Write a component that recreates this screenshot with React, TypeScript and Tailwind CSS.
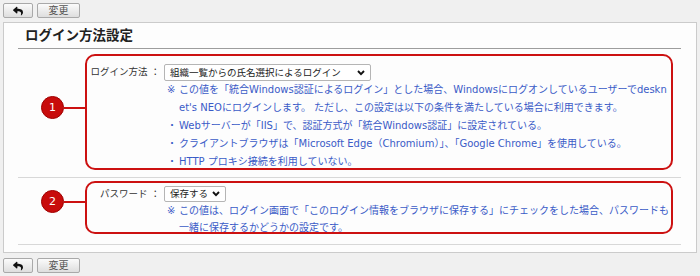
import React from "react";
import { FaReply } from "react-icons/fa";

const FONT = '"DejaVu Sans", "Noto Sans CJK JP", sans-serif';

function ToolButtons() {
  return (
    <div className="flex gap-[4px]">
      <button className="w-[30px] h-[15px] flex items-center justify-center rounded-[2px] border border-[#a9a9a9] bg-gradient-to-b from-[#fbfbfb] to-[#dedede]">
        <FaReply className="w-[10px] h-[10px] text-[#111]" />
      </button>
      <button
        className="w-[43px] h-[15px] flex items-center justify-center rounded-[2px] border border-[#a9a9a9] bg-gradient-to-b from-[#fbfbfb] to-[#dedede] text-[10px] leading-none text-[#555]"
        style={{ fontFamily: FONT }}
      >
        変更
      </button>
    </div>
  );
}

function Chevron() {
  return (
    <svg width="8" height="6" viewBox="0 0 8 6" className="shrink-0">
      <polyline points="1,1 4,4.2 7,1" fill="none" stroke="#111" strokeWidth="1.9" />
    </svg>
  );
}

function FakeSelect({ text, width, height }: { text: string; width: string; height: string }) {
  return (
    <div
      className={`${width} ${height} flex items-center justify-between pl-[5px] pr-[5px] bg-white border border-[#b5b5b5] rounded-[2px] text-[9.5px] text-[#222]`}
    >
      <span className="leading-none">{text}</span>
      <Chevron />
    </div>
  );
}

function Note({ mark, leading, children }: { mark: string; leading: string; children: React.ReactNode }) {
  return (
    <div className={`flex ml-[3px] ${leading} text-[10px] text-[#3a5bc7]`}>
      <span className="w-[12px] shrink-0">{mark}</span>
      <div className="w-[492px] shrink-0 break-all">{children}</div>
    </div>
  );
}

function Badge({ n, top }: { n: string; top: string }) {
  return (
    <div className={`absolute left-[-46px] ${top} flex items-center`}>
      <div className="w-[23px] h-[23px] rounded-full bg-[#c80c0c] border border-[#a00000] flex items-center justify-center text-white text-[11px] leading-none">
        {n}
      </div>
      <div className="w-[22px] h-[2px] bg-[#cc1111]" />
    </div>
  );
}

export default function App() {
  return (
    <div
      className="w-[700px] h-[276px] bg-[#f0f0f0] overflow-hidden"
      style={{ fontFamily: FONT }}
    >
      <div className="pt-[3px] pl-[3px] h-[22px]">
        <ToolButtons />
      </div>

      <div className="mx-[3px] border border-[#cbcbcb] bg-[#fdfdfd] pl-[14px] pr-[15px] pb-[7px]">
        <div className="h-[26px] border-b border-[#9d9d9d] pl-[7px] flex items-center">
          <h1 className="text-[13.5px] font-bold text-[#222] leading-none">ログイン方法設定</h1>
        </div>

        {/* Row 1 */}
        <div className="border-b border-[#d8d8d8] pt-[5px] pb-[7px] pl-[67px] pr-[8px]">
          <div className="relative h-[116px] border-2 border-[#cc1111] rounded-[10px] pt-[8px]">
            <Badge n="1" top="top-[40px]" />
            <div className="flex gap-[4px]">
              <div className="w-[79px] h-[17px] flex items-center justify-end text-[9.5px] text-[#333] whitespace-nowrap">
                ログイン方法 ：
              </div>
              <div className="flex flex-col">
                <FakeSelect text="組織一覧からの氏名選択によるログイン" width="w-[207px]" height="h-[17px]" />
                <Note mark="※" leading="leading-[18px]">
                  この値を「統合Windows認証によるログイン」とした場合、Windowsにログオンしているユーザーでdesknet's NEOにログインします。 ただし、この設定は以下の条件を満たしている場合に利用できます。
                </Note>
                <Note mark="・" leading="leading-[18px]">Webサーバーが「IIS」で、認証方式が「統合Windows認証」に設定されている。</Note>
                <Note mark="・" leading="leading-[18px]">クライアントブラウザは「Microsoft Edge（Chromium）」、「Google Chrome」を使用している。</Note>
                <Note mark="・" leading="leading-[18px]">HTTP プロキシ接続を利用していない。</Note>
              </div>
            </div>
          </div>
        </div>

        {/* Row 2 */}
        <div className="border-b border-[#d8d8d8] pt-[3px] pb-[10px] pl-[67px] pr-[8px]">
          <div className="relative h-[53px] border-2 border-[#cc1111] rounded-[10px] pt-[3px]">
            <Badge n="2" top="top-[7px]" />
            <div className="flex gap-[4px]">
              <div className="w-[79px] h-[16px] flex items-center justify-end text-[9.5px] text-[#333] whitespace-nowrap">
                パスワード ：
              </div>
              <div className="flex flex-col">
                <FakeSelect text="保存する" width="w-[62px]" height="h-[16px]" />
                <Note mark="※" leading="leading-[17px]">
                  この値は、ログイン画面で「このログイン情報をブラウザに保存する」にチェックをした場合、パスワードも一緒に保存するかどうかの設定です。
                </Note>
              </div>
            </div>
          </div>
        </div>
      </div>

      <div className="pt-[5px] pl-[3px]">
        <ToolButtons />
      </div>
    </div>
  );
}
